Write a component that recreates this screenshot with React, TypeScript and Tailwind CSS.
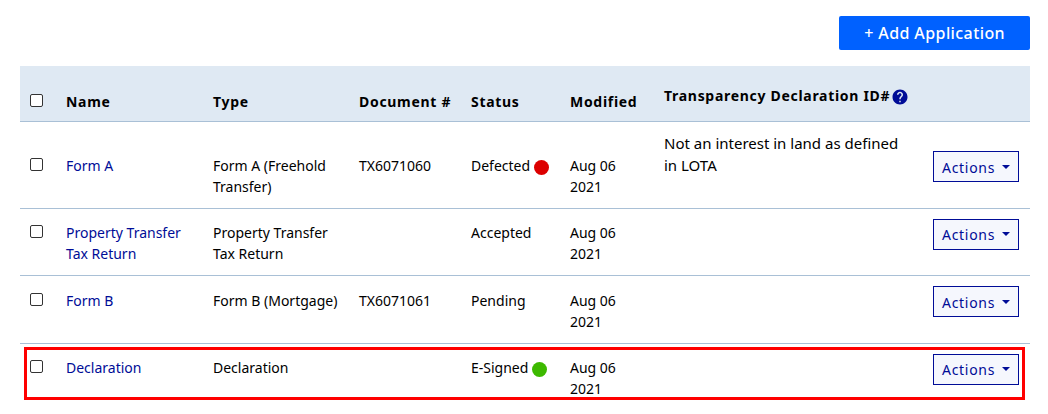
import { MdHelp } from 'react-icons/md';

type Application = {
  name: string;
  type: string;
  documentNumber?: string;
  status: string;
  indicator?: string;
  modified: string;
  declaration?: string;
  highlighted?: boolean;
};

const applications: Application[] = [
  {
    name: 'Form A',
    type: 'Form A (Freehold Transfer)',
    documentNumber: 'TX6071060',
    status: 'Defected',
    indicator: 'bg-[#dc0000]',
    modified: 'Aug 06 2021',
    declaration: 'Not an interest in land as defined in LOTA',
  },
  {
    name: 'Property Transfer Tax Return',
    type: 'Property Transfer Tax Return',
    status: 'Accepted',
    modified: 'Aug 06 2021',
  },
  {
    name: 'Form B',
    type: 'Form B (Mortgage)',
    documentNumber: 'TX6071061',
    status: 'Pending',
    modified: 'Aug 06 2021',
  },
  {
    name: 'Declaration',
    type: 'Declaration',
    status: 'E-Signed',
    indicator: 'bg-[#3db900]',
    modified: 'Aug 06 2021',
    highlighted: true,
  },
];

const Checkbox = ({ label }: { label: string }) => (
  <input
    type="checkbox"
    aria-label={label}
    className="inline-block h-[13px] w-[13px] appearance-none rounded-xs border border-[#333333] bg-white align-baseline checked:bg-[#000c97]"
  />
);

const ApplicationRow = ({ application }: { application: Application }) => (
  <tr className="relative h-[67px] border-b border-[#a9c0d6] align-baseline last:border-b-0">
    <td className="px-2.5 pt-2.5">
      <Checkbox label={`Select ${application.name}`} />
      {application.highlighted && (
        <span className="pointer-events-none absolute top-1 right-[5px] left-1 h-[53px] border-3 border-[#ff0000]" />
      )}
    </td>
    <td className="px-2.5 pt-2.5 pb-[11px]">
      <a href="#" className="text-[#000c97]">
        {application.name}
      </a>
    </td>
    <td className="px-2.5 pt-2.5 pb-[11px]">{application.type}</td>
    <td className="px-2.5 pt-2.5 pb-[11px]">{application.documentNumber}</td>
    <td className="pt-2.5 pb-[11px] pl-2.5 whitespace-nowrap">
      {application.status}
      {application.indicator && (
        <span
          className={`ml-1 inline-block h-[15px] w-[15px] rounded-full align-[-4px] ${application.indicator}`}
        />
      )}
    </td>
    <td className="pt-2.5 pr-6 pb-[11px] pl-2.5">{application.modified}</td>
    <td className="px-2.5 pt-2.5 pb-[11px]">
      {application.declaration && (
        <span className="inline-block text-[15px] leading-[22px]">
          {application.declaration}
        </span>
      )}
    </td>
    <td className="px-2.5 pt-2.5">
      <button
        type="button"
        className="inline-flex h-[31px] w-[86px] items-center justify-between border border-[#000c97] bg-[#f5f7fd] px-2 pt-0.5 align-[-2px] text-sm tracking-wider text-[#000c97]"
      >
        Actions
        <svg viewBox="0 0 8 4" className="mb-0.5 h-1 w-2" fill="currentColor">
          <path d="M0 0h8L4 4z" />
        </svg>
      </button>
    </td>
  </tr>
);

const App = () => {
  return (
    <div className="bg-white py-4 pr-[18px] pl-5 font-['Noto_Sans',sans-serif] text-sm leading-[21px] text-black">
      <div className="flex justify-end">
        <button
          type="button"
          className="h-[34px] rounded-xs bg-[#0061ff] px-[25px] text-base font-medium tracking-wide text-white"
        >
          + Add Application
        </button>
      </div>
      <table className="mt-4 w-full table-fixed border-collapse text-left">
        <colgroup>
          <col className="w-9" />
          <col className="w-[147px]" />
          <col className="w-[146px]" />
          <col className="w-28" />
          <col className="w-[99px]" />
          <col className="w-[94px]" />
          <col />
          <col className="w-[107px]" />
        </colgroup>
        <thead>
          <tr className="h-[55px] border-b border-[#a9c0d6] bg-[#dfe9f3] align-bottom tracking-wider">
            <th className="px-2.5 pb-[9px]">
              <Checkbox label="Select all applications" />
            </th>
            <th className="px-2.5 pb-[9px]">Name</th>
            <th className="px-2.5 pb-[9px]">Type</th>
            <th className="px-2.5 pb-[9px] whitespace-nowrap">Document #</th>
            <th className="px-2.5 pb-[9px]">Status</th>
            <th className="px-2.5 pb-[9px]">Modified</th>
            <th className="px-2.5 pb-[15px] whitespace-nowrap">
              Transparency Declaration ID#
              <MdHelp className="ml-px inline-block h-[18px] w-[18px] align-[-5px] text-[#000c97]" />
            </th>
            <td />
          </tr>
        </thead>
        <tbody>
          {applications.map((application) => (
            <ApplicationRow key={application.name} application={application} />
          ))}
        </tbody>
      </table>
    </div>
  );
};

export default App;
